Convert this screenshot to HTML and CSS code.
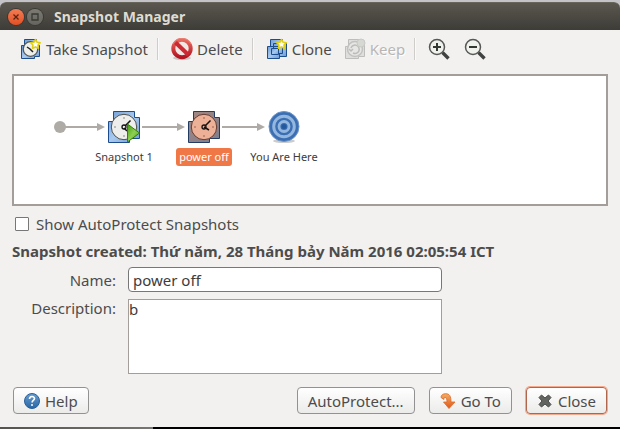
FILE: index.html
```html
<!DOCTYPE html>
<html lang="en">
<head>
<meta charset="utf-8">
<title>Snapshot Manager</title>
<link rel="stylesheet" href="styles.css">
</head>
<body>
<svg class="defs" aria-hidden="true">
  <defs>
    <linearGradient id="blue" x1="0" y1="0" x2="1" y2="1"><stop offset="0" stop-color="#6e9dd6"/><stop offset=".5" stop-color="#a9c9ee"/><stop offset="1" stop-color="#6c9bd4"/></linearGradient>
    <linearGradient id="slate" x1="0" y1="0" x2="1" y2="1"><stop offset="0" stop-color="#a5877f"/><stop offset="1" stop-color="#7b7f90"/></linearGradient>
    <linearGradient id="red" x1="0" y1="0" x2="0" y2="1"><stop offset="0" stop-color="#ea6a60"/><stop offset="1" stop-color="#b31422"/></linearGradient>
    <linearGradient id="green" x1="0" y1="0" x2="1" y2="1"><stop offset="0" stop-color="#3f9a0c"/><stop offset=".5" stop-color="#8fd052"/><stop offset="1" stop-color="#4aa013"/></linearGradient>
    <linearGradient id="orange" x1="0" y1="0" x2="0" y2="1"><stop offset="0" stop-color="#f3ad62"/><stop offset="1" stop-color="#e2571a"/></linearGradient>
    <linearGradient id="help" x1="0" y1="0" x2="0" y2="1"><stop offset="0" stop-color="#6a9dd0"/><stop offset="1" stop-color="#2766a4"/></linearGradient>
  </defs>
</svg>
<div class="window">
  <header class="titlebar">
    <button class="wm close" aria-label="Close window"><svg width="16" height="16" viewBox="0 0 16 16"><path d="M5.500 5.500l5 5M10.500 5.500l-5 5" stroke="#5a2412" stroke-width="1.300"/></svg></button>
    <button class="wm max" aria-label="Maximize"><svg width="16" height="16" viewBox="0 0 16 16"><path d="M5 5h6v6H5z" fill="none" stroke="#393832" stroke-width="1.300"/></svg></button>
    <h1>Snapshot Manager</h1>
  </header>

  <div class="toolbar" role="toolbar">
    <button class="tool">
      <svg width="22" height="22" viewBox="0 0 22 22"><path d="M4.500 1.500h12v14h-12z" fill="url(#blue)" stroke="#1d4d8c"/><path d="M1.500 20.500v-13h18v11h-5v2z" fill="url(#blue)" stroke="#1d4d8c"/><circle cx="10.500" cy="11" r="7.300" fill="#eeeeeb" stroke="#555753" stroke-width="1.300"/><path d="M7 9l3 2 3 3" fill="none" stroke="#222" stroke-width="1.500"/><path d="M15.500 1.500l1.500 2.700 3.200.5-2.200 2.300.4 3.200-2.900-1.300-2.900 1.300.3-3.200-2.100-2.300 3.200-.5z" fill="#fff" stroke="#e0cf16" stroke-width="1.600" stroke-linejoin="round"/></svg>
      Take Snapshot
    </button>
    <span class="sep"></span>
    <button class="tool">
      <svg width="22" height="22" viewBox="0 0 22 22"><ellipse cx="11" cy="20" rx="9" ry="2" fill="#c9c8c5"/><circle cx="11" cy="10.500" r="8.700" fill="#efe9e5" stroke="url(#red)" stroke-width="4"/><path d="M4.500 4.500l13 12.500" stroke="#cc2932" stroke-width="4"/><path d="M2 6a10 10 0 0 1 18 0" fill="none" stroke="#e98b80" stroke-width=".7"/></svg>
      Delete
    </button>
    <span class="sep"></span>
    <button class="tool">
      <svg width="22" height="22" viewBox="0 0 22 22"><g fill="url(#blue)" stroke="#1d4d8c"><path d="M4.500 1.500h12v14h-12z"/><path d="M7.500 5.500h13v13h-13z"/><path d="M1.500 8.500h12v12h-12z"/><path d="M7.500 8.500h9v7h-9z"/><path d="M5.500 10.500h7v6h-7z"/></g><path d="M15.500 1.500l1.500 2.700 3.200.5-2.200 2.300.4 3.200-2.900-1.300-2.900 1.300.3-3.200-2.100-2.300 3.200-.5z" fill="#fff" stroke="#e0cf16" stroke-width="1.600" stroke-linejoin="round"/></svg>
      Clone
    </button>
    <button class="tool keep" disabled>
      <svg width="22" height="22" viewBox="0 0 22 22"><path d="M4.500 1.500h12v4h4v13h-6v2h-13v-12h3z" fill="#dededc" stroke="#bdbdbb"/><circle cx="11" cy="11" r="7.500" fill="#e6e6e4" stroke="#c1c1bf" stroke-width="1.500"/><path d="M7 10a4.200 4.200 0 1 1 2 5M5 11l2 2 2-2" fill="none" stroke="#bcbcba" stroke-width="1.500"/><circle cx="17" cy="5" r="4" fill="#d6d8d3" stroke="#c8c9c5"/></svg>
      Keep
    </button>
    <span class="sep"></span>
    <button class="tool zoom" aria-label="Zoom in"><svg width="22" height="22" viewBox="0 0 22 22"><path d="M14.500 14.500l6 6" stroke="#3f4340" stroke-width="3.400"/><circle cx="9" cy="9" r="7.500" fill="#f0f2ee" stroke="#555955" stroke-width="1.500"/><path d="M5 9h8M9 5v8" stroke="#353936" stroke-width="2"/></svg></button>
    <button class="tool zoom" aria-label="Zoom out"><svg width="22" height="22" viewBox="0 0 22 22"><path d="M14.500 14.500l6 6" stroke="#3f4340" stroke-width="3.400"/><circle cx="9" cy="9" r="7.500" fill="#f0f2ee" stroke="#555955" stroke-width="1.500"/><path d="M5 9h8" stroke="#353936" stroke-width="2"/></svg></button>
  </div>

  <main>
    <section class="canvas" aria-label="Snapshots">
      <svg class="links" width="320" height="128" viewBox="0 0 320 128"><g fill="#aeaaa5" stroke="none"><circle cx="46" cy="51" r="6"/><path d="M46 50h38v2H46zM128 50h36v2h-36zM208 50h36v2h-36z"/><path d="M83 47l8 4-8 4zM163 47l8 4-8 4zM243 47l8 4-8 4z"/></g></svg>
      <div class="node first">
        <svg width="32" height="32" viewBox="0 0 32 32"><path d="M5.500.5h21v6h5v21h-10v4H.5v-21h5z" fill="url(#blue)" stroke="#1d4d8c"/><circle cx="16" cy="16" r="12.700" fill="#eeeeec" stroke="#4d504d"/><g fill="#aaa"><circle cx="16" cy="7" r="1"/><circle cx="7" cy="16" r="1"/><circle cx="16" cy="25" r="1"/></g><path d="M22.500 9.500L17 15M16 17l3 3" stroke="#111" stroke-width="1.500"/><circle cx="16" cy="16" r="2" fill="none" stroke="#111" stroke-width="1.300"/><path d="M19.500 13v18l12-9z" fill="url(#green)" stroke="#378006"/></svg>
        <span>Snapshot 1</span>
      </div>
      <div class="node second">
        <svg width="32" height="32" viewBox="0 0 32 32"><path d="M5.500.5h21v6h5v21h-10v4H.5v-21h5z" fill="url(#slate)" stroke="#233c64"/><circle cx="16" cy="16" r="12.700" fill="#edb198" stroke="#653b30"/><g fill="#b77c66"><circle cx="16" cy="7" r="1"/><circle cx="7" cy="16" r="1"/><circle cx="25" cy="16" r="1"/><circle cx="16" cy="25" r="1"/></g><path d="M22.500 9.500L17 15M16 16l5 3" stroke="#181210" stroke-width="1.500"/><circle cx="16" cy="16" r="2" fill="none" stroke="#181210" stroke-width="1.300"/></svg>
        <span class="selected">power off</span>
      </div>
      <div class="node third">
        <svg width="32" height="32" viewBox="0 0 32 32"><ellipse cx="16" cy="30" rx="11" ry="2" fill="#ccc"/><circle cx="16" cy="15.500" r="15" fill="#3b6fb2" stroke="#6c94c8"/><circle cx="16" cy="15.500" r="10.300" fill="none" stroke="#94b7e0" stroke-width="3"/><circle cx="16" cy="15.500" r="5" fill="none" stroke="#94b7e0" stroke-width="2.800"/><circle cx="16" cy="15.500" r="2.500" fill="#245a9d"/></svg>
        <span>You Are Here</span>
      </div>
    </section>

    <label class="check"><input type="checkbox">Show AutoProtect Snapshots</label>
    <h2>Snapshot created: Thứ năm, 28 Tháng bảy Năm 2016 02:05:54 ICT</h2>

    <form class="details">
      <label for="name">Name:</label>
      <input id="name" type="text" value="power off">
      <label for="description">Description:</label>
      <textarea id="description">b</textarea>
    </form>
  </main>

  <footer>
    <button class="btn help"><svg width="16" height="16" viewBox="0 0 16 16"><circle cx="8" cy="8" r="7.500" fill="url(#help)" stroke="#28609a"/><path d="M5.500 6c0-3.200 5-3.200 5-.4 0 1.900-2.400 1.900-2.400 3.900" fill="none" stroke="#fff" stroke-width="1.600"/><circle cx="8" cy="12" r="1" fill="#fff"/></svg>Help</button>
    <button class="btn auto">AutoProtect...</button>
    <button class="btn goto"><svg width="16" height="16" viewBox="0 0 16 16"><path d="M1 4.500C1 2 3 .7 5.500.7c4 0 5.500 2.300 5.500 8.300h4L9 15.500 3.500 9H7c0-3-.5-4.500-2-4.500C4 4.500 3.800 5.500 4 6.500z" fill="url(#orange)" stroke="#dc6728" stroke-width=".8" stroke-linejoin="round"/></svg>Go To</button>
    <button class="btn default"><svg width="16" height="16" viewBox="0 0 16 16"><path d="M4.500 2L8 5l3.500-3L14 4.500 11 8l3 3.500-2.500 2.500L8 11l-3.500 3L2 11.500 5 8 2 4.500z" fill="#626460" stroke="#4a4c49" stroke-linejoin="round"/></svg>Close</button>
  </footer>
</div>
</body>
</html>
```
FILE: styles.css
```css
* { box-sizing: border-box; }

body {
  margin: 0;
  min-height: 100vh;
  padding: 2px 0;
  background: linear-gradient(90deg, #55534f, #777672 153px, #000 153px) bottom / 100% 2px no-repeat, #c4c3c8;
  font: 15px/20px "Noto Sans", "Open Sans", sans-serif;
  color: #4c4c4c;
}

button, input, textarea { font: inherit; color: inherit; }
svg { display: block; flex: none; }
.defs { position: absolute; width: 0; height: 0; }

.window {
  display: flex;
  flex-direction: column;
  min-height: calc(100vh - 4px);
  border-radius: 6px 6px 0 0;
  background: #f2f1f0;
}

.titlebar {
  display: flex;
  align-items: center;
  height: 28px;
  padding: 0 8px;
  border-top: 1px solid #66645b;
  border-radius: 6px 6px 0 0;
  background: linear-gradient(#59574e, #3d3c37);
}

.wm {
  width: 16px;
  height: 16px;
  margin-right: 3px;
  padding: 0;
  border: 0;
  border-radius: 50%;
  box-shadow: 0 0 0 1px #3a3934;
}
.close { background: linear-gradient(#f37c54, #e35023); }
.max { background: linear-gradient(#7b7a73, #65645e); }

h1 {
  margin: 0 0 0 8px;
  font-size: 14px;
  line-height: 20px;
  color: #dfdbd2;
}

.toolbar {
  display: flex;
  align-items: center;
  height: 38px;
  padding-left: 20px;
}

.tool {
  display: flex;
  align-items: center;
  gap: 4px;
  padding: 0;
  border: 0;
  background: none;
  white-space: nowrap;
}
.keep { margin-left: 12px; }
.keep:disabled { color: #b7b6b4; text-shadow: 1px 1px #fff; }
.zoom + .zoom { margin-left: 14px; }

.sep {
  width: 2px;
  height: 22px;
  margin: 0 12px 0 9px;
  border-left: 1px solid #cfcdca;
  border-right: 1px solid #fafafa;
}

main { padding: 6px 12px 0; }

.canvas {
  position: relative;
  height: 132px;
  border: 2px solid #a39e99;
  background: #fff;
}
.links { position: absolute; top: 0; left: 0; }

.node {
  position: absolute;
  top: 35px;
  width: 80px;
  display: flex;
  flex-direction: column;
  align-items: center;
  gap: 5px;
  font-size: 11px;
  line-height: 18px;
  color: #3c3c3c;
  white-space: nowrap;
}
.first { left: 70px; }
.second { left: 150px; }
.third { left: 230px; }
.node span { padding: 0 3px; border-radius: 3px; }
.node .selected { background: #f07746; color: #fff; }

.check {
  display: flex;
  align-items: center;
  gap: 7px;
  width: max-content;
  margin: 8px 0 0 3px;
}
.check input {
  appearance: none;
  width: 14px;
  height: 14px;
  margin: 0;
  border: 1px solid #777;
  border-radius: 1px;
  background: #fff;
}

h2 {
  margin: 7px 0 0;
  font-size: 15px;
  line-height: 20px;
}

.details {
  display: grid;
  grid-template-columns: 104px minmax(0, 314px);
  column-gap: 12px;
  row-gap: 6px;
  margin-top: 6px;
}
.details label { text-align: right; line-height: 18px; }
.details label:first-child { line-height: 26px; }
.details input, .details textarea { width: 100%; background: #fff; color: #3c3c3c; }
.details input {
  height: 25px;
  padding: 0 4px;
  border: 1px solid #777;
  border-radius: 4px;
}
.details textarea {
  display: block;
  height: 75px;
  padding: 0;
  border: 1px solid #a39e99;
  border-radius: 0;
  line-height: 18px;
  resize: none;
}

footer {
  display: flex;
  gap: 14px;
  margin-top: 13px;
  padding: 0 13px 12px;
}

.btn {
  display: flex;
  align-items: center;
  justify-content: center;
  gap: 5px;
  height: 27px;
  padding: 0 10px;
  border: 1px solid #929292;
  border-radius: 4px;
  background: linear-gradient(#fff, #ebebea);
  white-space: nowrap;
}
.help { margin-right: auto; }
.default { border-color: #b0664a; box-shadow: 0 0 0 1px #f3a98c; }
```
